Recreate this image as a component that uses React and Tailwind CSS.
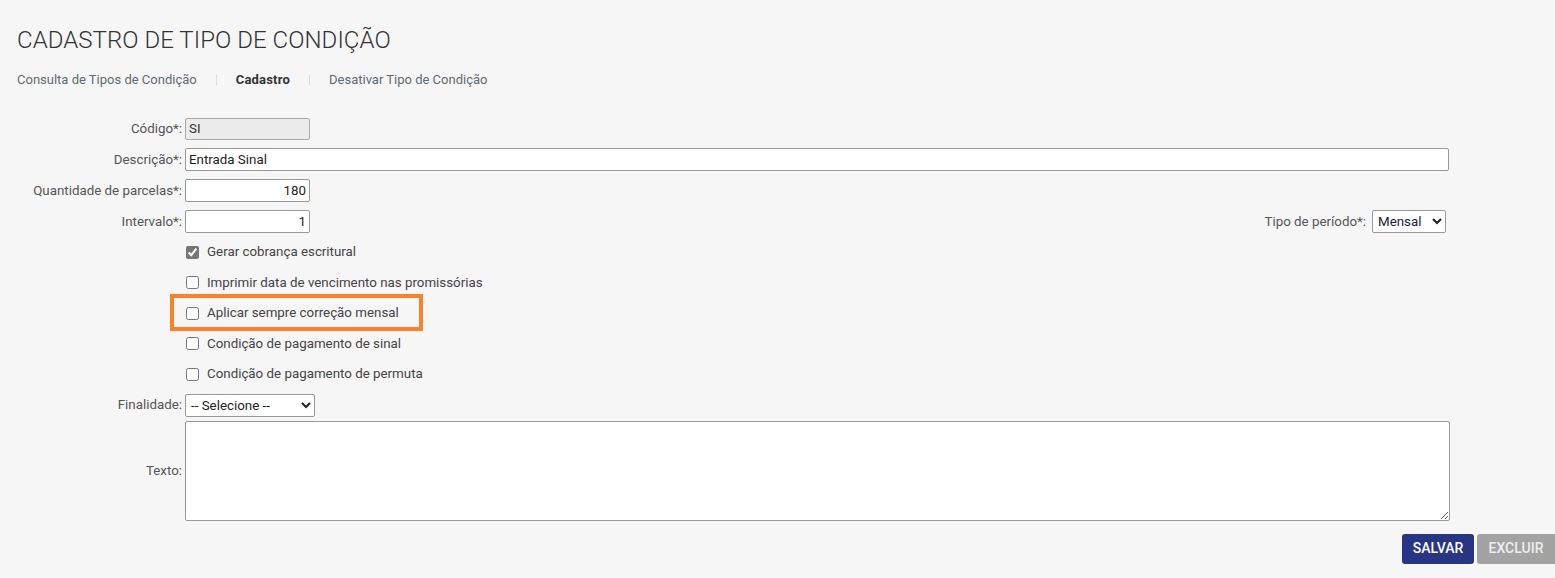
import { useState } from 'react'

const checks = [
  { id: 'cobranca', label: 'Gerar cobrança escritural', checked: true },
  { id: 'imprimir', label: 'Imprimir data de vencimento nas promissórias' },
  { id: 'correcao', label: 'Aplicar sempre correção mensal', highlight: true },
  { id: 'sinal', label: 'Condição de pagamento de sinal' },
  { id: 'permuta', label: 'Condição de pagamento de permuta' },
]

function Label({ children }) {
  return (
    <label className="w-[165px] shrink-0 text-right text-[13.33px] text-[#555]">
      {children}
    </label>
  )
}

function Field({ label, children }) {
  return (
    <div className="flex items-center h-[31px] gap-[3px]">
      <Label>{label}</Label>
      {children}
    </div>
  )
}

export default function App() {
  const [state, setState] = useState(
    Object.fromEntries(checks.map((c) => [c.id, !!c.checked]))
  )

  return (
    <div className="min-h-[578px] bg-[#f6f6f6] font-['Roboto',sans-serif] pl-[17px] pt-[26px] overflow-hidden">
      {/* Header */}
      <h1 className="text-[24px] font-light text-[#333] leading-[28px] tracking-[0.05px]">
        CADASTRO DE TIPO DE CONDIÇÃO
      </h1>
      <nav className="flex items-center mt-[18px] text-[13px] leading-[16px]">
        <a className="text-[#5f6b72]">Consulta de Tipos de Condição</a>
        <span className="mx-[19px] w-px h-[10px] bg-[#dcdcdc]" />
        <a className="text-[#333] font-bold tracking-[0.2px]">Cadastro</a>
        <span className="mx-[19px] w-px h-[10px] bg-[#dcdcdc]" />
        <a className="text-[#5f6b72]">Desativar Tipo de Condição</a>
      </nav>

      {/* Form */}
      <form className="mt-[25px]">
        <Field label="Código*:">
          <input
            readOnly
            value="SI"
            className="w-[125px] h-[22px] px-[3px] bg-[#ececec] border border-[#a9a9a9] rounded-[2px] text-[13.33px] text-[#333] outline-none"
          />
        </Field>
        <Field label="Descrição*:">
          <input
            defaultValue="Entrada Sinal"
            className="w-[1264px] h-[23px] px-[3px] bg-white border border-[#999] rounded-[2px] text-[13.33px] text-[#222] outline-none"
          />
        </Field>
        <Field label="Quantidade de parcelas*:">
          <input
            defaultValue="180"
            className="w-[125px] h-[23px] px-[3px] bg-white border border-[#999] rounded-[2px] text-[13.33px] text-right text-[#222] outline-none"
          />
        </Field>
        <Field label="Intervalo*:">
          <input
            defaultValue="1"
            className="w-[125px] h-[23px] px-[3px] bg-white border border-[#999] rounded-[2px] text-[13.33px] text-right text-[#222] outline-none"
          />
          <div className="ml-auto mr-[109px] flex items-center gap-[6px]">
            <span className="text-[13.33px] text-[#555]">Tipo de período*:</span>
            <select className="w-[74px] h-[23px] pl-[1px] bg-white border border-[#999] rounded-[2px] text-[13.33px] text-[#1a1a3a] outline-none">
              <option>Mensal</option>
              <option>Anual</option>
            </select>
          </div>
        </Field>

        {checks.map((c) => (
          <div key={c.id} className="flex items-center h-[30.5px] pl-[169px]">
            <div className="relative flex items-center gap-[8px] h-[20px]">
              <input
                type="checkbox"
                checked={state[c.id]}
                onChange={() => setState((s) => ({ ...s, [c.id]: !s[c.id] }))}
                className="m-0 w-[13px] h-[13px] accent-[#767676]"
              />
              <span className="text-[13.33px] text-[#444]">{c.label}</span>
              {c.highlight && (
                <span className="absolute left-[-16px] right-[-24px] top-[-9px] bottom-[-8px] border-[4px] border-[#f7842a] pointer-events-none" />
              )}
            </div>
          </div>
        ))}

        <Field label="Finalidade:">
          <select className="w-[130px] h-[23px] pl-[1px] bg-white border border-[#999] rounded-[2px] text-[13.33px] text-[#222] outline-none">
            <option>-- Selecione --</option>
          </select>
        </Field>
        <div className="flex items-center gap-[3px]">
          <Label>Texto:</Label>
          <textarea className="w-[1265px] h-[100px] bg-white border border-[#999] rounded-[2px] text-[13.33px] outline-none" />
        </div>

        <div className="flex justify-end gap-[3px] mt-[13px]">
          <button
            type="button"
            className="w-[72px] h-[30px] bg-[#283583] text-white text-[14px] font-medium rounded-[3px]"
          >
            SALVAR
          </button>
          <button
            type="button"
            className="w-[78px] h-[30px] bg-[#a3a3a3] text-[#eeeeee] text-[14px] font-medium rounded-l-[3px]"
          >
            EXCLUIR
          </button>
        </div>
      </form>
    </div>
  )
}
